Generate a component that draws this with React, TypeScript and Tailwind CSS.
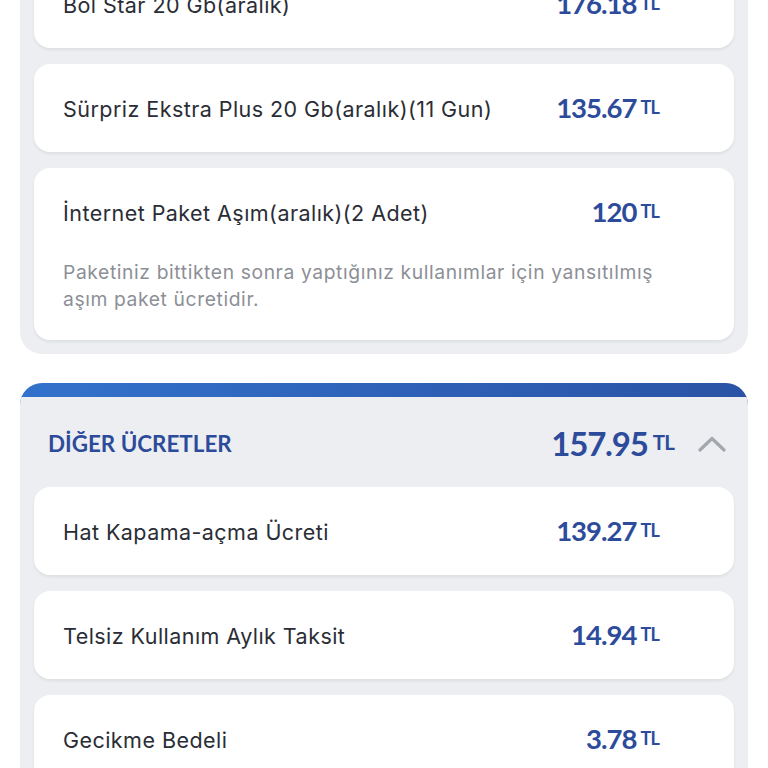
import React from "react"

type Charge = {
  label: string
  amount: string
  note?: string
}

const packageCharges: Charge[] = [
  { label: "Bol Star 20 Gb(aralık)", amount: "176.18" },
  { label: "Sürpriz Ekstra Plus 20 Gb(aralık)(11 Gun)", amount: "135.67" },
  {
    label: "İnternet Paket Aşım(aralık)(2 Adet)",
    amount: "120",
    note: "Paketiniz bittikten sonra yaptığınız kullanımlar için yansıtılmış aşım paket ücretidir.",
  },
]

const otherCharges: Charge[] = [
  { label: "Hat Kapama-açma Ücreti", amount: "139.27" },
  { label: "Telsiz Kullanım Aylık Taksit", amount: "14.94" },
  { label: "Gecikme Bedeli", amount: "3.78" },
]

const ChargeCard = ({ charge }: { charge: Charge }) => {
  return (
    <div className="rounded-[16px] bg-white shadow-[0_2px_3px_rgba(30,40,60,0.07)]">
      <div className="flex h-[88px] items-center pl-[29px] pr-[75px]">
        <span className="flex-1 pt-[2px] font-['Inter',sans-serif] text-[21.5px] tracking-[0.45px] text-[#2a2d35]">
          {charge.label}
        </span>
        <span className="flex items-center text-[#2d4b9b]">
          <span className="text-[27.5px] font-bold tracking-[-1px]">
            {charge.amount}
          </span>
          <span className="mb-[2px] ml-[4px] text-[18px] font-bold tracking-[-0.8px]">
            TL
          </span>
        </span>
      </div>
      {charge.note && (
        <p className="mt-[3px] pb-[27px] pl-[29px] pr-[60px] font-['Inter',sans-serif] text-[19.3px] leading-[27px] tracking-[0.6px] text-[#8c8f96]">
          {charge.note}
        </p>
      )}
    </div>
  )
}

export default function App() {
  return (
    <div className="h-screen overflow-hidden bg-white font-['Lato','Noto_Sans',sans-serif]">
      <div className="mx-[20px] -mt-[54px]">
        <section className="flex flex-col gap-4 rounded-b-[22px] bg-[#eceef1] p-[14px]">
          {packageCharges.map((c) => (
            <ChargeCard key={c.label} charge={c} />
          ))}
        </section>

        <section className="mt-[29px] overflow-hidden rounded-t-[22px] bg-gradient-to-r from-[#3272cc] to-[#2a53a5] pt-[14px]">
          <div className="bg-[#eceef1] px-[14px] pb-[14px]">
            <div className="flex h-[90px] items-center pl-[14px] pr-[8px] pt-[4px]">
              <h2 className="flex-1 text-[22.4px] font-bold text-[#2d4b9b]">
                DİĞER ÜCRETLER
              </h2>
              <span className="flex items-center text-[#2d4b9b]">
                <span className="text-[33px] font-bold tracking-[-1.2px]">
                  157.95
                </span>
                <span className="mb-[3px] ml-[5px] text-[20.5px] font-bold tracking-[-0.8px]">
                  TL
                </span>
              </span>
              <svg
                width="28"
                height="16"
                viewBox="0 0 28 16"
                fill="none"
                stroke="#a3a7ae"
                strokeWidth="3.2"
                strokeLinecap="round"
                strokeLinejoin="round"
                className="ml-[24px]"
              >
                <polyline points="2,14 14,2.5 26,14" />
              </svg>
            </div>
            <div className="flex flex-col gap-4">
              {otherCharges.map((c) => (
                <ChargeCard key={c.label} charge={c} />
              ))}
            </div>
          </div>
        </section>
      </div>
    </div>
  )
}
